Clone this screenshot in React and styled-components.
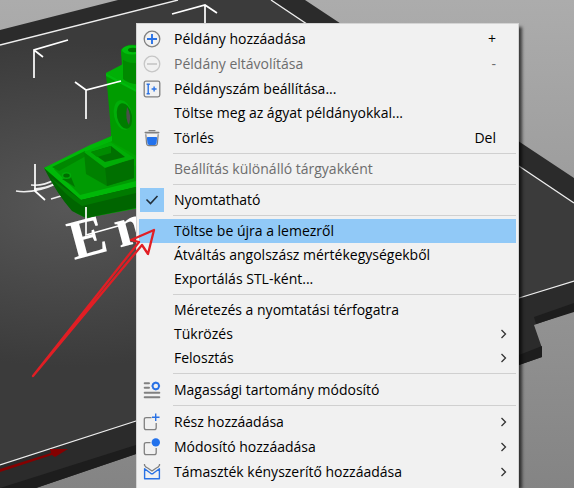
import React from 'react';
import styled, { createGlobalStyle } from 'styled-components';

const GlobalStyle = createGlobalStyle`
  * { box-sizing: border-box; }
  body {
    margin: 0;
    overflow: hidden;
    font-family: "Open Sans", "Noto Sans", sans-serif;
  }
`;

const Viewport = styled.main`
  position: relative;
  height: 100vh;
  overflow: hidden;
  background: linear-gradient(#acacac, #848484);
`;

const Scene = styled.svg`
  display: block;
  width: 100%;
  height: 100%;
`;

const Pointer = styled.svg`
  position: absolute;
  inset: 0;
  width: 100%;
  height: 100%;
  pointer-events: none;
`;

const Menu = styled.div`
  position: absolute;
  top: 23px;
  bottom: 0;
  left: 136px;
  width: 383px;
  padding: 2px;
  overflow: hidden;
  background: #f1f1f1;
  border: 1px solid #d4d4d4;
  border-bottom: 0;
`;

const MenuShadow = styled.div`
  position: absolute;
  top: 28px;
  bottom: 0;
  left: 140px;
  width: 379px;
  box-shadow: 2px 0 3px 1px rgba(0, 0, 0, 0.65);
`;

const Row = styled.button`
  display: grid;
  grid-template-columns: 24px 1fr auto;
  column-gap: 10px;
  align-items: center;
  width: 100%;
  height: ${(p) => (p.$tall ? 25 : 24)}px;
  padding: 0 ${(p) => (p.$submenu ? 8 : 20)}px 0 1px;
  border: 0;
  background: ${(p) => (p.$active ? '#91c9f7' : 'transparent')};
  color: ${(p) => (p.disabled ? '#6d6d6d' : '#000')};
  font-family: inherit;
  font-size: 14px;
  line-height: 24px;
  text-align: left;
  white-space: nowrap;
`;

const IconSlot = styled.span`
  display: flex;
  align-items: center;
  justify-content: center;
  height: 24px;
`;

const Divider = styled.hr`
  height: 1px;
  margin: 3px 0 3px 34px;
  border: 0;
  background: #d0d0d0;
`;

const CheckCell = styled.span`
  display: grid;
  place-items: center;
  width: 24px;
  height: 24px;
  & > * { grid-area: 1 / 1; }
`;

const CheckBox = styled.input`
  appearance: none;
  width: 24px;
  height: 24px;
  margin: 0;
  &:checked { background: #91c9f7; }
  &:not(:checked) + svg { visibility: hidden; }
`;

const Icon = ({ children }) => (
  <svg width="18" height="18" viewBox="0 0 18 18" fill="none" aria-hidden="true">{children}</svg>
);

const icons = {
  add: (
    <Icon>
      <circle cx="9" cy="9" r="7.8" stroke="#808080" strokeWidth="1.3" />
      <path d="M9 4v10M4 9h10" stroke="#2a72e5" strokeWidth="1.9" />
    </Icon>
  ),
  remove: (
    <Icon>
      <circle cx="9" cy="9" r="7.8" stroke="#c6c6c6" strokeWidth="1.3" />
      <path d="M4 9h10" stroke="#c6c6c6" strokeWidth="1.6" />
    </Icon>
  ),
  count: (
    <Icon>
      <rect x="1.2" y="1.2" width="15.6" height="15.6" rx="1.8" stroke="#808080" strokeWidth="1.3" />
      <path d="M3.6 4.2h3.2M3.6 13.8h3.2M5.2 4.2v9.6M8.6 9h5M11.1 6.5v5" stroke="#2a72e5" strokeWidth="1.4" />
    </Icon>
  ),
  trash: (
    <Icon>
      <path d="M6 1.6h6" stroke="#808080" strokeWidth="1.2" strokeLinecap="round" />
      <path d="M2.3 3.6h13.4" stroke="#808080" strokeWidth="1.6" strokeLinecap="round" />
      <path d="M2.8 5.2l.8 9.3q.3 2.2 2.4 2.2h6q2.100 0 2.400-2.200l.8-9.300" stroke="#808080" strokeWidth="1.2" />
      <path d="M3.900 8.800q0-.8.900-.8h8.400q.900 0 .9.800l-.5 5.200q-.2 1.900-1.900 1.900H6.300q-1.700 0-1.900-1.900z" fill="#2372ec" />
    </Icon>
  ),
  layers: (
    <Icon>
      <path d="M1.700 2.300h4.300M1.700 6.700h4.300M1.700 11.700h14.600M1.700 16.300h14.600" stroke="#808080" strokeWidth="2" strokeLinecap="round" />
      <circle cx="12.800" cy="5" r="3.200" stroke="#2a72e5" strokeWidth="1.900" />
      <path d="M12.800 .7v1.400M12.800 7.900v1.400M8.500 5h1.400M15.700 5h1.400M9.800 2l.9.900M14.900 7.100l.9.900M15.800 2l-.9.900M10.700 7.100l-.9.900" stroke="#2a72e5" strokeWidth="1.200" />
    </Icon>
  ),
  part: (
    <Icon>
      <path d="M8.500 4.600H3.200q-1.900 0-1.900 1.900v8.300q0 1.900 1.900 1.900h8.100q1.900 0 1.900-1.900V10" stroke="#808080" strokeWidth="1.300" />
      <path d="M12.700 .5v7.500M9 4.200h7.500" stroke="#2a72e5" strokeWidth="1.400" />
    </Icon>
  ),
  modifier: (
    <Icon>
      <path d="M7.500 4.600H3.200q-1.900 0-1.900 1.900v8.300q0 1.900 1.900 1.900h8.100q1.900 0 1.900-1.900V10" stroke="#808080" strokeWidth="1.300" />
      <circle cx="12.800" cy="4.400" r="4.200" fill="#2372ec" />
    </Icon>
  ),
  support: (
    <Icon>
      <path d="M1.500 1v1.200q1 2 3.200 2.800L9 8l4.300-3Q15.500 4.200 16.500 2.200V1" stroke="#808080" strokeWidth="1.300" />
      <path d="M1.600 5.700v10h14.800v-10L10.300 10.300q-1.300.9-2.600 0z" stroke="#2a72e5" strokeWidth="1.400" strokeLinejoin="round" />
    </Icon>
  ),
};

const Chevron = () => (
  <svg width="9" height="10" viewBox="0 0 9 10" fill="none" aria-hidden="true">
    <path d="M2.500 1l4 4-4 4" stroke="#333" strokeWidth="1.300" />
  </svg>
);

function Item({ icon, label, shortcut, submenu, tall, active, disabled }) {
  return (
    <Row type="button" role="menuitem" aria-haspopup={submenu ? 'menu' : undefined}
      disabled={disabled} $tall={tall} $active={active} $submenu={submenu}>
      <IconSlot>{icons[icon]}</IconSlot>
      <span>{label}</span>
      {submenu ? <Chevron /> : <span>{shortcut}</span>}
    </Row>
  );
}

const groups = [
  [
    { icon: 'add', label: 'Példány hozzáadása', shortcut: '+', tall: true },
    { icon: 'remove', label: 'Példány eltávolítása', shortcut: '-', tall: true, disabled: true },
    { icon: 'count', label: 'Példányszám beállítása...', tall: true },
    { label: 'Töltse meg az ágyat példányokkal...' },
    { icon: 'trash', label: 'Törlés', shortcut: 'Del', tall: true },
  ],
  [{ label: 'Beállítás különálló tárgyakként', disabled: true }],
  [{ label: 'Nyomtatható', checkable: true }],
  [
    { label: 'Töltse be újra a lemezről', active: true },
    { label: 'Átváltás angolszász mértékegységekből' },
    { label: 'Exportálás STL-ként...' },
  ],
  [
    { label: 'Méretezés a nyomtatási térfogatra' },
    { label: 'Tükrözés', submenu: true },
    { label: 'Felosztás', submenu: true },
  ],
  [{ icon: 'layers', label: 'Magassági tartomány módosító', tall: true }],
  [
    { icon: 'part', label: 'Rész hozzáadása', submenu: true, tall: true },
    { icon: 'modifier', label: 'Módosító hozzáadása', submenu: true, tall: true },
    { icon: 'support', label: 'Támaszték kényszerítő hozzáadása', submenu: true, tall: true },
  ],
];

function CheckItem({ label }) {
  return (
    <Row as="label">
      <CheckCell>
        <CheckBox type="checkbox" defaultChecked />
        <svg width="14" height="12" viewBox="0 0 14 12" fill="none" aria-hidden="true">
          <path d="M1.500 5.500l4 4 7-7.500" stroke="#222f3a" strokeWidth="1.600" />
        </svg>
      </CheckCell>
      <span>{label}</span>
    </Row>
  );
}

function PrintBed() {
  return (
    <g>
      <path d="M0 30L118 0H305L574 178V311L534 325L542 348V357L519 365L136 454L36 488H0Z" fill="#2b2b2b" />
      <path d="M0 488L136 445V454L36 488Z" fill="#1d1d1d" />
      <path d="M574 303L534 317L536 324L574 312ZM519 355L542 346V357L519 365Z" fill="#1d1d1d" />
      <path d="M0 45L178 0H271L574 203V281L136 421L0 465Z" fill="url(#bed)" />
      <path d="M0 45L178 0M271 0L574 203M574 281L519 298L136 421L0 465" stroke="#eee" strokeWidth="1.300" fill="none" />
      <path d="M0 469L51 453L50 449L68 449L55 457L52 455L0 472Z" fill="#850000" />
    </g>
  );
}

function Boat() {
  return (
    <g>
      <path d="M44 168L91 146L111 136L110 108L106 73L122 66L121 50Q128 43 140 46V208L86 218L76 213Z" fill="#00a400" />
      <path d="M106 73L140 91V158L112 142Z" fill="#009c00" />
      <path d="M106 73L123 64L140 72V92Z" fill="#00b006" />
      <path d="M106 73L137 90H140V94L106 76Z" fill="#00ba0c" />
      <path d="M123 58Q131 64 140 62V84Q130 85 123 79Z" fill="#008a00" />
      <path d="M121 50Q128 42 140 46V62Q130 65 122 59Z" fill="#009d04" />
      <ellipse cx="132" cy="50" rx="10" ry="4.600" fill="#00bd0c" />
      <ellipse cx="133" cy="50" rx="5" ry="2.200" fill="#007200" />
      <ellipse cx="123" cy="115" rx="9" ry="15" transform="rotate(-12 123 115)" fill="#00ae08" />
      <ellipse cx="124.500" cy="116" rx="7.500" ry="13" transform="rotate(-12 124.500 116)" fill="#007c00" />
      <path d="M127 107q5 8 2 18q-4-6-2-18z" fill="#4a504a" />
      <path d="M44 168L90 145L112 136V141L54 169L80 194L136 180V188L81 201Z" fill="#00b808" />
      <path d="M54 169L88 154L136 166V181L80 195Z" fill="#009b03" />
      <path d="M52 167L85 151L86 156L59 171Z" fill="#008700" />
      <path d="M44 168L81 200L136 187V208L86 218L72 211Q57 194 44 168Z" fill="#006500" />
      <path d="M81 200L136 187V193L82 206Q65 195 51 178Z" fill="#007a00" />
      <path d="M84 152L105 167L134 159V178L107 186L86 174Z" fill="#008000" />
      <path d="M105 167L134 159V178L107 186Z" fill="#007000" />
      <path d="M84 152L110 142L134 158L105 168Z" fill="#00ad06" />
      <path d="M91 152L111 146L125 157L105 162Z" fill="#007000" />
      <path d="M91 152L111 146V153L97 157Z" fill="#008b00" />
      <path d="M71 177L75 187L62 179Z" fill="#007600" />
      <ellipse cx="66.500" cy="175.500" rx="4" ry="2.800" fill="#006c00" stroke="#00a908" strokeWidth="1.500" />
    </g>
  );
}

const Logo = styled.text`
  font: bold 56px "Liberation Serif", serif;
  fill: #fff;
`;

export default function App() {
  return (
    <>
      <GlobalStyle />
      <Viewport>
        <Scene viewBox="0 0 574 488" preserveAspectRatio="xMinYMin slice" aria-hidden="true">
          <defs>
            <radialGradient id="bed" gradientUnits="userSpaceOnUse" cx="70" cy="205" r="270" gradientTransform="translate(0 82) scale(1 .6)">
              <stop offset="0" stopColor="#575757" />
              <stop offset="1" stopColor="#3b3b3b" />
            </radialGradient>
          </defs>
          <PrintBed />
          <path d="M16 191Q34 194 58 183M31 185Q44 186 54 180M34 189Q47 188 54 184M51 199L61 196" stroke="#eee" strokeWidth="1.500" fill="none" />
          <Logo x="74 121" y="260" transform="rotate(-15 74 260)">En</Logo>
          <Boat />
          <path d="M68 40L34 50V78M34 50L43 57M75 82L86 90L121 81M86 90V119M35 164V191L45 200M86 207V235L118 226M172 14L205 5L217 13M205 5V23" stroke="#fff" strokeWidth="1.700" fill="none" />
        </Scene>
        <MenuShadow />
        <Menu role="menu">
          {groups.map((items, index) => (
            <React.Fragment key={items[0].label}>
              {index > 0 && <Divider />}
              {items.map((item) => item.checkable
                ? <CheckItem key={item.label} label={item.label} />
                : <Item key={item.label} {...item} />)}
            </React.Fragment>
          ))}
        </Menu>
        <Pointer viewBox="0 0 574 488" preserveAspectRatio="xMinYMin slice" fill="none" aria-hidden="true">
          <path d="M33 376L139 242L131 240L154 230L148 254L142 245L33 376Z" stroke="#e11e24" strokeWidth="2.300" strokeLinejoin="round" />
        </Pointer>
      </Viewport>
    </>
  );
}
